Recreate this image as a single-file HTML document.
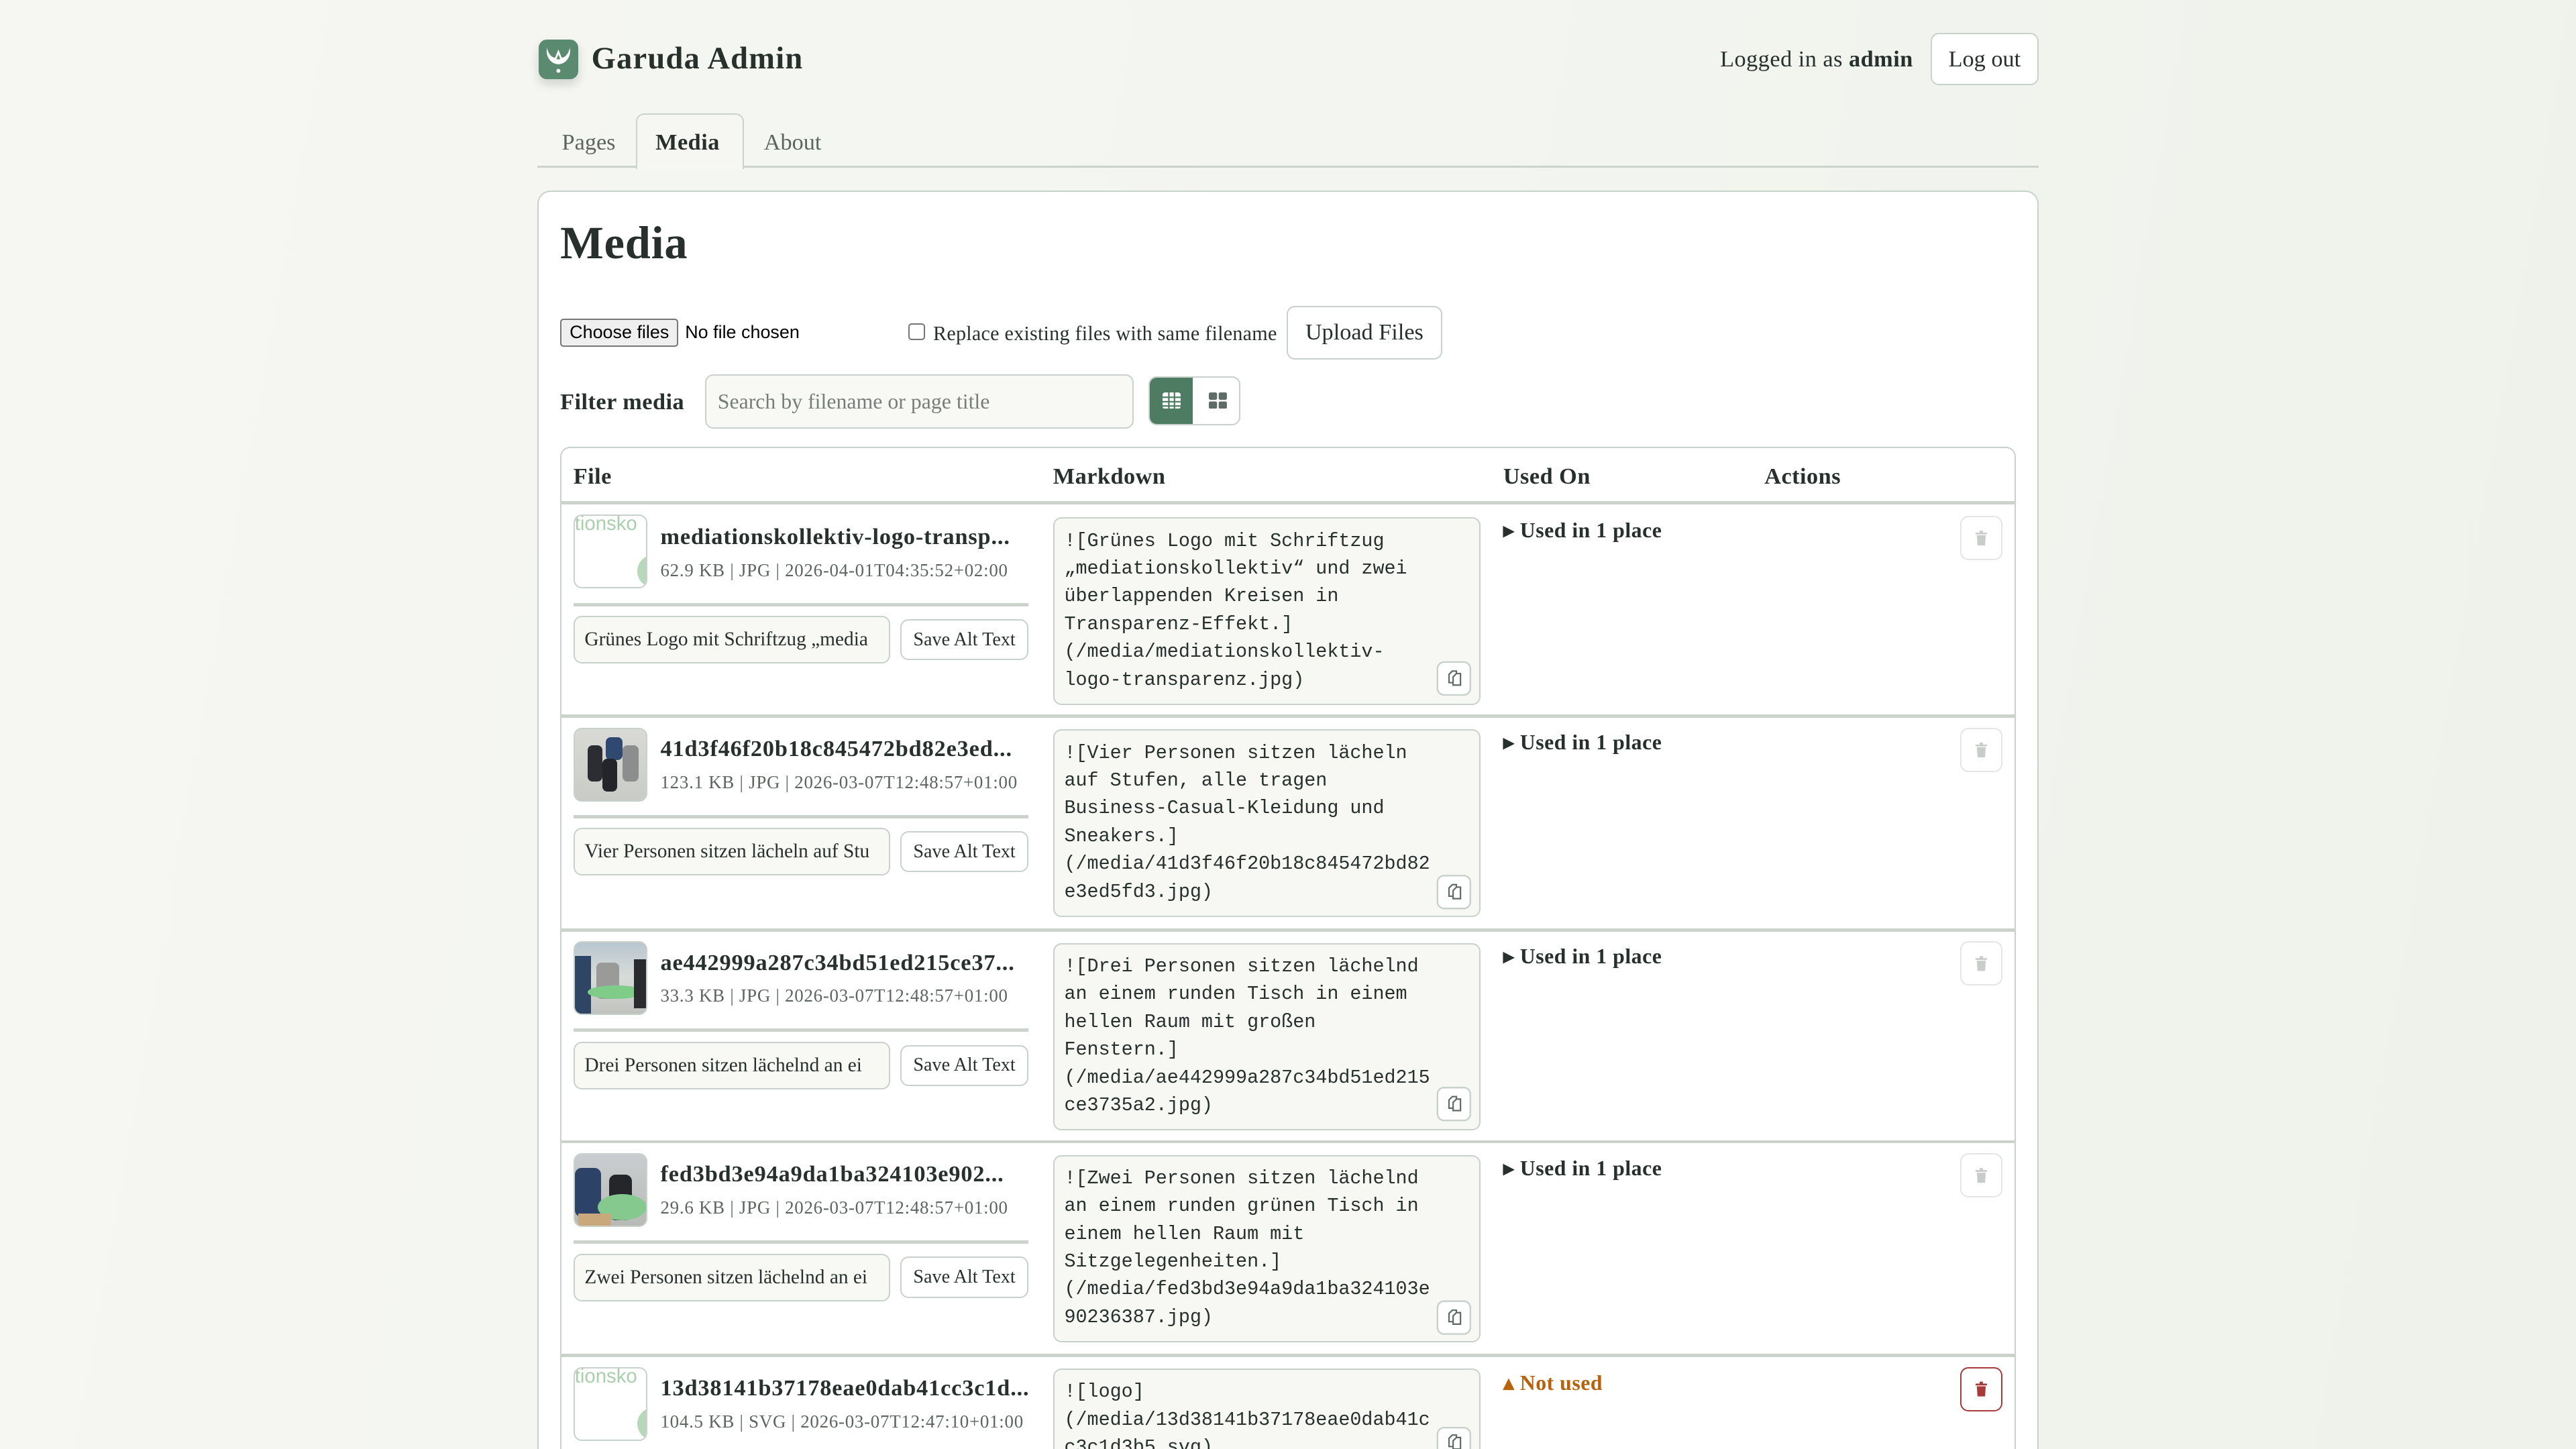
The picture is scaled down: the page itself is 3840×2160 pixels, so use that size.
<!DOCTYPE html>
<html><head><meta charset="utf-8">
<style>
html,body{margin:0;padding:0;width:3840px;height:2160px;overflow:hidden;background:#f2f4ef;}
#w{zoom:2.44898;width:1568px;height:882px;position:relative;overflow:hidden;
background:linear-gradient(100deg,#f6f7f3 0%,#f3f5f0 50%,#eef2ea 100%);
font-family:"Liberation Serif",serif;color:#27302d;}
.a{position:absolute;}
.btn{position:absolute;background:#fff;border:1px solid #c8d1cb;border-radius:5px;box-sizing:border-box;display:flex;align-items:center;justify-content:center;}
.card{position:absolute;left:327px;top:116px;width:914px;height:766px;background:#fff;border:1px solid #c8d1cb;border-bottom:none;border-radius:8px 8px 0 0;box-sizing:border-box;}
.tbl{position:absolute;left:341px;top:272px;width:886px;height:610px;border:1px solid #c8d1cb;border-bottom:none;border-radius:6px 6px 0 0;box-sizing:border-box;}
.hl{position:absolute;height:2px;background:#cbd3cc;}
.th{position:absolute;top:282px;font-weight:bold;font-size:14px;letter-spacing:.2px;}
.thumb{position:absolute;width:45px;height:45px;border:1px solid #c8d1cb;border-radius:5px;box-sizing:border-box;overflow:hidden;background:#fff;}
.nm{position:absolute;left:402px;font-weight:bold;font-size:14px;letter-spacing:.35px;white-space:nowrap;}
.mt{position:absolute;left:402px;font-size:11px;letter-spacing:.3px;color:#5c6560;white-space:nowrap;}
.sep{position:absolute;left:349px;width:277px;height:2px;background:#cbd3cc;}
.alt{position:absolute;left:349px;width:193px;height:29px;border:1px solid #c8d1cb;border-radius:5px;box-sizing:border-box;background:#f8f9f5;font-size:12px;line-height:27px;padding-left:6px;white-space:nowrap;overflow:hidden;}
.save{left:548px;width:78px;height:25px;font-size:11.5px;}
.md{position:absolute;left:641px;width:260px;height:114px;border:1px solid #c8d1cb;border-radius:5px;box-sizing:border-box;background:#f7f8f4;padding:5px 0 0 6px;font-family:"Liberation Mono",monospace;font-size:11.6px;line-height:16.9px;white-space:pre;overflow:hidden;color:#27302d;}
.used{position:absolute;left:915px;font-weight:bold;font-size:13px;letter-spacing:.2px;white-space:nowrap;}
.tr{position:absolute;left:1193px;width:26px;height:27px;border:1px solid #e3e7e3;border-radius:5px;box-sizing:border-box;background:#fff;}
</style></head><body><div id="w">

<div class="a" style="left:328px;top:24px;width:24px;height:24px;border-radius:5px;background:#5a8a6f;box-shadow:0 3px 6px rgba(0,0,0,.15)">
<svg width="24" height="24" viewBox="0 0 24 24"><path d="M5 5 C4 11 8 15 12 15 C16 15 20 11 19 5 C18 9 16 11 14 11 L12 6 L10 11 C8 11 6 9 5 5 Z" fill="#fff"/><path d="M12 9 L13.2 12 L10.8 12 Z" fill="#5a8a6f"/><circle cx="12" cy="19" r="1.2" fill="#fff"/></svg></div>
<div class="a" style="left:360px;top:25px;font-size:19px;font-weight:bold;letter-spacing:.5px">Garuda Admin</div>
<div class="a" style="left:1047px;top:28px;font-size:14px;letter-spacing:.2px">Logged in as <b>admin</b></div>
<div class="btn" style="left:1175px;top:20px;width:66px;height:32px;font-size:14px;">Log out</div>

<div class="a" style="left:327px;top:101px;width:914px;height:1px;background:#cbd3cc"></div>
<div class="a" style="left:342px;top:79px;font-size:14px;color:#5c6560">Pages</div>
<div class="a" style="left:387px;top:69px;width:66px;height:34px;box-sizing:border-box;border:1px solid #cbd3cc;border-bottom:none;border-radius:5px 5px 0 0;background:#f6f7f3"></div>
<div class="a" style="left:399px;top:79px;font-size:14px;font-weight:bold;letter-spacing:.2px">Media</div>
<div class="a" style="left:465px;top:79px;font-size:14px;color:#5c6560">About</div>

<div class="card"></div>
<div class="a" style="left:341px;top:132px;font-size:28px;font-weight:bold;letter-spacing:.3px">Media</div>

<div class="a" style="left:341px;top:194px;width:72px;height:17px;border:1px solid #767676;border-radius:2px;background:#efefef;box-sizing:border-box;font-family:'Liberation Sans',sans-serif;font-size:11px;line-height:15px;text-align:center;color:#000">Choose files</div>
<div class="a" style="left:417px;top:196px;font-family:'Liberation Sans',sans-serif;font-size:11px;color:#000">No file chosen</div>
<div class="a" style="left:553px;top:197px;width:10px;height:10px;border:1px solid #767676;border-radius:2px;box-sizing:border-box;background:#fff"></div>
<div class="a" style="left:568px;top:196px;font-size:12.3px;letter-spacing:.1px">Replace existing files with same filename</div>
<div class="btn" style="left:783px;top:186px;width:95px;height:33px;font-size:14px;">Upload Files</div>

<div class="a" style="left:341px;top:237px;font-size:14px;font-weight:bold;letter-spacing:.2px">Filter media</div>
<div class="a" style="left:429px;top:228px;width:261px;height:33px;border:1px solid #c8d1cb;border-radius:5px;box-sizing:border-box;background:#f8f9f5;font-size:13px;color:#777e7a;line-height:32px;padding-left:7px">Search by filename or page title</div>
<div class="a" style="left:699px;top:229px;width:56px;height:30px;border:1px solid #c8d1cb;border-radius:5px;box-sizing:border-box;overflow:hidden;background:#fff">
<div class="a" style="left:0;top:0;width:26px;height:30px;background:#4e7c63"></div>
<svg class="a" style="left:8px;top:9px" width="11" height="10" viewBox="0 0 11 10"><rect x="0" y="0" width="11" height="10" rx="1.5" fill="#fff"/><g fill="#4e7c63"><rect x="3.4" y="0" width=".9" height="10"/><rect x="6.8" y="0" width=".9" height="10"/><rect x="0" y="2.5" width="11" height=".9"/><rect x="0" y="5.2" width="11" height=".9"/><rect x="0" y="7.8" width="11" height=".9"/></g></svg>
<svg class="a" style="left:36px;top:9px" width="11" height="10" viewBox="0 0 11 10"><g fill="#5f6b66"><rect x="0" y="0" width="5" height="4.5" rx="1"/><rect x="6" y="0" width="5" height="4.5" rx="1"/><rect x="0" y="5.5" width="5" height="4.5" rx="1"/><rect x="6" y="5.5" width="5" height="4.5" rx="1"/></g></svg>
</div>

<div class="tbl"></div>
<div class="th" style="left:349px">File</div>
<div class="th" style="left:641px">Markdown</div>
<div class="th" style="left:915px">Used On</div>
<div class="th" style="left:1074px">Actions</div>
<div class="hl" style="left:341px;top:305px;width:886px"></div>
<div class="hl" style="left:341px;top:435px;width:886px"></div>
<div class="hl" style="left:341px;top:565px;width:886px"></div>
<div class="hl" style="left:341px;top:694px;width:886px"></div>
<div class="hl" style="left:341px;top:824px;width:886px"></div>

<div class="thumb" style="left:349px;top:313px"><div class="a" style="left:0;top:-2px;font-family:'Liberation Sans',sans-serif;font-size:12px;color:#a9cfac">tionsko</div><div class="a" style="left:38px;top:24px;width:20px;height:20px;border-radius:50%;background:#b8d8bb"></div></div>
<div class="nm" style="top:319px">mediationskollektiv-logo-transp...</div>
<div class="mt" style="top:341px">62.9 KB | JPG | 2026-04-01T04:35:52+02:00</div>
<div class="sep" style="top:367px"></div>
<div class="alt" style="top:375px">Grünes Logo mit Schriftzug „media</div>
<div class="btn save" style="top:377px">Save Alt Text</div>
<div class="md" style="top:315px">![Grünes Logo mit Schriftzug
„mediationskollektiv“ und zwei
überlappenden Kreisen in
Transparenz-Effekt.]
(/media/mediationskollektiv-
logo-transparenz.jpg)</div>
<div class="used" style="top:315px">▸ Used in 1 place</div>
<div class="tr" style="top:314px"></div>

<div class="thumb" style="left:349px;top:443px;background:linear-gradient(180deg,#d9dad6 0%,#c9cbc7 100%)"><div class="a" style="left:8px;top:10px;width:9px;height:22px;background:#2b2d33;border-radius:3px"></div><div class="a" style="left:19px;top:5px;width:10px;height:14px;background:#2f4970;border-radius:3px"></div><div class="a" style="left:17px;top:18px;width:9px;height:20px;background:#23252a;border-radius:3px"></div><div class="a" style="left:29px;top:10px;width:10px;height:22px;background:#8b8d8f;border-radius:3px"></div></div>
<div class="nm" style="top:448px">41d3f46f20b18c845472bd82e3ed...</div>
<div class="mt" style="top:470px">123.1 KB | JPG | 2026-03-07T12:48:57+01:00</div>
<div class="sep" style="top:496px"></div>
<div class="alt" style="top:504px">Vier Personen sitzen lächeln auf Stu</div>
<div class="btn save" style="top:506px">Save Alt Text</div>
<div class="md" style="top:444px">![Vier Personen sitzen lächeln
auf Stufen, alle tragen
Business-Casual-Kleidung und
Sneakers.]
(/media/41d3f46f20b18c845472bd82
e3ed5fd3.jpg)</div>
<div class="used" style="top:444px">▸ Used in 1 place</div>
<div class="tr" style="top:443px"></div>

<div class="thumb" style="left:349px;top:573px;background:linear-gradient(180deg,#b9c6cf 0%,#d8dcd9 50%,#bfc2bd 100%)"><div class="a" style="left:0;top:8px;width:10px;height:37px;background:#2e4566"></div><div class="a" style="left:13px;top:12px;width:14px;height:22px;background:#9a9a98;border-radius:3px"></div><div class="a" style="left:8px;top:26px;width:34px;height:8px;border-radius:50%;background:#7fcb88"></div><div class="a" style="left:36px;top:10px;width:9px;height:30px;background:#2a2b2f"></div></div>
<div class="nm" style="top:578px">ae442999a287c34bd51ed215ce37...</div>
<div class="mt" style="top:600px">33.3 KB | JPG | 2026-03-07T12:48:57+01:00</div>
<div class="sep" style="top:626px"></div>
<div class="alt" style="top:634px">Drei Personen sitzen lächelnd an ei</div>
<div class="btn save" style="top:636px">Save Alt Text</div>
<div class="md" style="top:574px">![Drei Personen sitzen lächelnd
an einem runden Tisch in einem
hellen Raum mit großen
Fenstern.]
(/media/ae442999a287c34bd51ed215
ce3735a2.jpg)</div>
<div class="used" style="top:574px">▸ Used in 1 place</div>
<div class="tr" style="top:573px"></div>

<div class="thumb" style="left:349px;top:702px;background:linear-gradient(180deg,#c9cdd0 0%,#b8bab5 100%)"><div class="a" style="left:0;top:8px;width:16px;height:30px;background:#2d4267;border-radius:4px"></div><div class="a" style="left:21px;top:12px;width:14px;height:28px;background:#25262a;border-radius:4px"></div><div class="a" style="left:14px;top:24px;width:30px;height:16px;border-radius:50%;background:#86c98e"></div><div class="a" style="left:2px;top:36px;width:20px;height:9px;background:#c9a97c"></div></div>
<div class="nm" style="top:707px">fed3bd3e94a9da1ba324103e902...</div>
<div class="mt" style="top:729px">29.6 KB | JPG | 2026-03-07T12:48:57+01:00</div>
<div class="sep" style="top:755px"></div>
<div class="alt" style="top:763px">Zwei Personen sitzen lächelnd an ei</div>
<div class="btn save" style="top:765px">Save Alt Text</div>
<div class="md" style="top:703px">![Zwei Personen sitzen lächelnd
an einem runden grünen Tisch in
einem hellen Raum mit
Sitzgelegenheiten.]
(/media/fed3bd3e94a9da1ba324103e
90236387.jpg)</div>
<div class="used" style="top:703px">▸ Used in 1 place</div>
<div class="tr" style="top:702px"></div>

<div class="thumb" style="left:349px;top:832px"><div class="a" style="left:0;top:-2px;font-family:'Liberation Sans',sans-serif;font-size:12px;color:#a9cfac">tionsko</div><div class="a" style="left:38px;top:24px;width:20px;height:20px;border-radius:50%;background:#b8d8bb"></div></div>
<div class="nm" style="top:837px">13d38141b37178eae0dab41cc3c1d...</div>
<div class="mt" style="top:859px">104.5 KB | SVG | 2026-03-07T12:47:10+01:00</div>
<div class="md" style="top:833px;height:60px">![logo]
(/media/13d38141b37178eae0dab41c
c3c1d3b5.svg)</div>
<div class="used" style="top:834px;color:#b8630c">▴ Not used</div>
<div class="tr" style="top:832px;border-color:#a83a3a"></div>

<svg class="a" style="left:0;top:0" width="1568" height="882">
<defs>
<g id="cpy" fill="none" stroke="#5f6b66" stroke-width="0.9"><path d="M2 3.5 L4 1.5 L6.5 1.5 L6.5 8.5 L2 8.5 Z"/><path d="M4.5 5 L6.5 3 L9 3 L9 10 L4.5 10 Z" fill="#fff"/></g>
<g id="trs"><rect x="0" y="1.2" width="7" height="1.1" rx=".4"/><rect x="2.5" y="0" width="2" height="1.5"/><path d="M.8 2.8 H6.2 L5.8 9 H1.2 Z"/></g>
</defs>
<rect x="875" y="403" width="20" height="20" rx="4" fill="#fff" stroke="#c8d1cb" stroke-width="1"/>
<rect x="875" y="533" width="20" height="20" rx="4" fill="#fff" stroke="#c8d1cb" stroke-width="1"/>
<rect x="875" y="662" width="20" height="20" rx="4" fill="#fff" stroke="#c8d1cb" stroke-width="1"/>
<rect x="875" y="792" width="20" height="20" rx="4" fill="#fff" stroke="#c8d1cb" stroke-width="1"/>
<rect x="875" y="869" width="20" height="20" rx="4" fill="#fff" stroke="#c8d1cb" stroke-width="1"/>
<use href="#cpy" x="880" y="407"/>
<use href="#cpy" x="880" y="537"/>
<use href="#cpy" x="880" y="666"/>
<use href="#cpy" x="880" y="796"/>
<use href="#cpy" x="880" y="872"/>
<use href="#trs" x="1202.5" y="323" fill="#c9cdca"/>
<use href="#trs" x="1202.5" y="452" fill="#c9cdca"/>
<use href="#trs" x="1202.5" y="582" fill="#c9cdca"/>
<use href="#trs" x="1202.5" y="711" fill="#c9cdca"/>
<use href="#trs" x="1202.5" y="841" fill="#a83a3a"/>
</svg>
</div></body></html>
